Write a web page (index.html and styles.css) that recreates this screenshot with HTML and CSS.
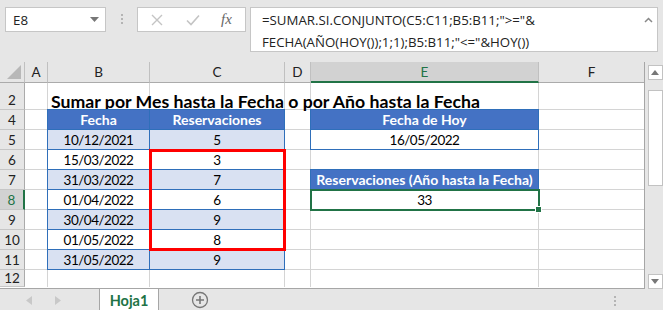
FILE: index.html
```html
<!DOCTYPE html>
<html lang="es">
<head>
    <meta charset="UTF-8">
    <title>Sumar por Mes hasta la Fecha</title>
    <link rel="stylesheet" href="styles.css">
</head>
<body>

    <!-- Formula bar -->
    <div class="toolbar">
        <div class="namebox">
            <span>E8</span>
            <svg class="drop" width="9" height="5" viewBox="0 0 9 5"><path d="M0 0h9L4.5 5z" fill="#777"/></svg>
        </div>
        <div class="grip"><i></i><i></i><i></i></div>
        <div class="fxbox">
            <svg width="12" height="12" viewBox="0 0 12 12"><path d="M1 1l10 10M11 1L1 11" stroke="#c4c4c4" stroke-width="1.4"/></svg>
            <svg width="14" height="12" viewBox="0 0 14 12"><path d="M1 6.5l4 4L13 1.5" stroke="#c4c4c4" stroke-width="1.6" fill="none"/></svg>
            <span class="fx">fx</span>
        </div>
        <div class="formula">
            <div class="ftext">=SUMAR.SI.CONJUNTO(C5:C11;B5:B11;"&gt;="&amp;<br>FECHA(AÑO(HOY());1;1);B5:B11;"&lt;="&amp;HOY())</div>
            <svg class="caret" width="9" height="6" viewBox="0 0 9 6"><path d="M1 5l3.5-3.5L8 5" stroke="#888" stroke-width="1.5" fill="none"/></svg>
        </div>
    </div>

    <div class="main">
        <div class="sheet">
            <!-- column headers -->
            <div class="corner"><svg width="14" height="14" viewBox="0 0 14 14"><path d="M14 0v14H0z" fill="#b8b8b8"/></svg></div>
            <div class="colhdr">A</div>
            <div class="colhdr">B</div>
            <div class="colhdr">C</div>
            <div class="colhdr">D</div>
            <div class="colhdr active">E</div>
            <div class="colhdr last">F</div>

            <!-- row headers -->
            <div class="rowhdr r2">2</div>
            <div class="rowhdr r4">4</div>
            <div class="rowhdr r5">5</div>
            <div class="rowhdr r6">6</div>
            <div class="rowhdr r7">7</div>
            <div class="rowhdr r8 active">8</div>
            <div class="rowhdr r9">9</div>
            <div class="rowhdr r10">10</div>
            <div class="rowhdr r11">11</div>
            <div class="rowhdr r12">12</div>

            <!-- gridlines -->
            <div class="hline r2"></div>
            <div class="hline r4"></div>
            <div class="hline r5"></div>
            <div class="hline r6"></div>
            <div class="hline r7"></div>
            <div class="hline r8"></div>
            <div class="hline r9"></div>
            <div class="hline r10"></div>
            <div class="hline r11"></div>
            <div class="vline ca"></div>
            <div class="vline cb"></div>
            <div class="vline cc"></div>
            <div class="vline cd"></div>
            <div class="vline ce"></div>

            <div class="title">Sumar por Mes hasta la Fecha o por Año hasta la Fecha</div>

            <div class="tbl">
                <div class="th">Fecha</div><div class="th">Reservaciones</div>
                <div class="td band">10/12/2021</div><div class="td band">5</div>
                <div class="td">15/03/2022</div><div class="td">3</div>
                <div class="td band">31/03/2022</div><div class="td band">7</div>
                <div class="td">01/04/2022</div><div class="td">6</div>
                <div class="td band">30/04/2022</div><div class="td band">9</div>
                <div class="td">01/05/2022</div><div class="td">8</div>
                <div class="td band">31/05/2022</div><div class="td band">9</div>
            </div>

            <div class="box today">
                <div class="th">Fecha de Hoy</div>
                <div class="td">16/05/2022</div>
            </div>

            <div class="box total">
                <div class="th">Reservaciones (Año hasta la Fecha)</div>
                <div class="td">33</div>
            </div>

            <div class="redbox"></div>
            <div class="selection"><span class="handle"></span></div>
        </div>

        <div class="vscroll">
            <div class="sbtn"><svg width="8" height="5" viewBox="0 0 8 5"><path d="M0 5h8L4 0z" fill="#777"/></svg></div>
            <div class="thumb"></div>
            <div class="sbtn down"><svg width="8" height="5" viewBox="0 0 8 5"><path d="M0 0h8L4 5z" fill="#777"/></svg></div>
        </div>
    </div>

    <!-- Sheet tabs -->
    <div class="tabs">
        <div class="nav">
            <svg width="6" height="9" viewBox="0 0 6 9"><path d="M6 0v9L0 4.5z" fill="#c8c8c8"/></svg>
            <svg width="6" height="9" viewBox="0 0 6 9"><path d="M0 0v9l6-4.5z" fill="#c8c8c8"/></svg>
        </div>
        <div class="tab">Hoja1</div>
        <div class="add">
            <svg width="18" height="18" viewBox="0 0 18 18"><circle cx="9" cy="9" r="7.5" fill="none" stroke="#777" stroke-width="1.3"/><path d="M9 5v8M5 9h8" stroke="#777" stroke-width="1.6"/></svg>
        </div>
        <div class="tabgrip"><i></i><i></i><i></i></div>
    </div>

</body>
</html>
```

FILE: styles.css
```css
body {
    margin: 0;
    width: 663px;
    height: 310px;
    overflow: hidden;
    background-color: #e6e6e6;
    font-family: Lato, "Liberation Sans", sans-serif;
    color: #000;
}

/* Formula bar */
.toolbar {
    height: 62px;
    display: flex;
    align-items: flex-start;
    padding: 7px 0 0 5px;
    box-sizing: border-box;
    font-family: "Open Sans", "Noto Sans", sans-serif;
}
.namebox {
    width: 101px;
    height: 25px;
    box-sizing: border-box;
    background-color: white;
    border: 1px solid #c6c6c6;
    display: flex;
    align-items: center;
    justify-content: space-between;
    padding: 0 6px 0 7px;
    font-size: 13.3px;
    color: #222;
}
.grip {
    width: 31px;
    display: flex;
    flex-direction: column;
    align-items: center;
    gap: 2px;
    padding-top: 7px;
}
.grip i, .tabgrip i {
    display: block;
    width: 2px;
    height: 2px;
    background-color: #b4b4b4;
}
.fxbox {
    width: 109px;
    height: 25px;
    box-sizing: border-box;
    background-color: white;
    border: 1px solid #c6c6c6;
    display: flex;
    align-items: center;
    padding-left: 13px;
    gap: 23px;
}
.fxbox .fx {
    font-family: "Liberation Serif", serif;
    font-style: italic;
    font-size: 15px;
    color: #666;
    margin-left: -2px;
}
.formula {
    width: 408px;
    height: 45px;
    margin-left: 4px;
    box-sizing: border-box;
    background-color: white;
    border: 1px solid #c6c6c6;
    display: flex;
    justify-content: space-between;
    padding: 1px 4px 0 11px;
}
.ftext {
    font-size: 13.25px;
    line-height: 22px;
    color: #222;
    white-space: nowrap;
}
.caret {
    margin-top: 8px;
}

/* Sheet */
.main {
    display: flex;
}
.sheet {
    display: grid;
    grid-template-columns: 25px 23px 102px 135px 26px 228px 105px;
    grid-template-rows: 21px 27px repeat(8, 20px) 17px;
    background-color: white;
    border-right: 1px solid #a6a6a6;
    border-bottom: 1px solid #a6a6a6;
    font-size: 13.5px;
}
.corner {
    grid-column: 1;
    grid-row: 1;
    background-color: #e6e6e6;
    border-right: 1px solid #c0c0c0;
    border-bottom: 1px solid #ababab;
    display: flex;
    align-items: flex-end;
    justify-content: flex-end;
    padding: 0 3px 3px 0;
}
.colhdr {
    grid-row: 1;
    background-color: #e6e6e6;
    border-right: 1px solid #c0c0c0;
    border-bottom: 1px solid #ababab;
    display: flex;
    align-items: center;
    justify-content: center;
    font-size: 13.5px;
    color: #222;
}
.colhdr.last {
    border-right: none;
}
.colhdr.active {
    background-color: #d2d2d2;
    color: #217346;
    border-bottom: 2px solid #217346;
}
.rowhdr {
    grid-column: 1;
    background-color: #e6e6e6;
    border-right: 1px solid #ababab;
    border-bottom: 1px solid #c6c6c6;
    display: flex;
    align-items: center;
    justify-content: center;
    font-size: 13.5px;
    color: #222;
}
.rowhdr.active {
    background-color: #d2d2d2;
    color: #217346;
    border-right: 2px solid #217346;
}
.r2 { grid-row: 2; }
.r4 { grid-row: 3; }
.r5 { grid-row: 4; }
.r6 { grid-row: 5; }
.r7 { grid-row: 6; }
.r8 { grid-row: 7; }
.r9 { grid-row: 8; }
.r10 { grid-row: 9; }
.r11 { grid-row: 10; }
.r12 { grid-row: 11; }
.rowhdr.r2 {
    align-items: flex-end;
    padding-bottom: 1px;
}
.hline {
    grid-column: 2 / -1;
    border-bottom: 1px solid #d4d4d4;
}
.vline {
    grid-row: 2 / -1;
    border-right: 1px solid #d4d4d4;
}
.ca { grid-column: 2; }
.cb { grid-column: 3; }
.cc { grid-column: 4; }
.cd { grid-column: 5; }
.ce { grid-column: 6; }

.title {
    grid-column: 3 / 8;
    grid-row: 2;
    align-self: end;
    padding: 0 0 1px 3px;
    font-size: 17.7px;
    font-weight: bold;
    line-height: 14px;
    white-space: nowrap;
}

/* Tables */
.tbl, .box {
    margin: -1px 0 0 -1px;
    display: grid;
    border-left: 1px solid #2f6fba;
    border-top: 1px solid #2f6fba;
}
.tbl {
    grid-column: 3 / 5;
    grid-row: 3 / 11;
    grid-template-columns: 102px 135px;
    grid-template-rows: repeat(8, 20px);
}
.box {
    grid-column: 6;
    grid-template-rows: 20px 20px;
}
.today { grid-row: 3 / 5; }
.total { grid-row: 6 / 8; }
.th, .td {
    border-right: 1px solid #2f6fba;
    border-bottom: 1px solid #2f6fba;
    display: flex;
    align-items: center;
    justify-content: center;
    white-space: nowrap;
}
.th {
    background-color: #4472c4;
    color: white;
    font-weight: bold;
    font-size: 14px;
}
.td {
    background-color: white;
    letter-spacing: -0.5px;
}
.td.band {
    background-color: #d9e1f2;
}
.total .td {
    border-right-color: transparent;
    border-bottom-color: transparent;
}

.redbox {
    grid-column: 4;
    grid-row: 5 / 10;
    margin: -1px -1px -1px -1px;
    border: 3px solid #ff0000;
}
.selection {
    grid-column: 6;
    grid-row: 7;
    margin: -1px;
    border: 2px solid #217346;
    position: relative;
}
.handle {
    position: absolute;
    right: -4px;
    bottom: -4px;
    width: 5px;
    height: 5px;
    background-color: #217346;
    border: 1px solid white;
}

/* Vertical scrollbar */
.vscroll {
    width: 18px;
    display: flex;
    flex-direction: column;
    align-items: center;
    padding: 3px 0 0 2px;
    box-sizing: border-box;
}
.sbtn {
    width: 15px;
    height: 15px;
    box-sizing: border-box;
    background-color: white;
    border: 1px solid #c2c2c2;
    display: flex;
    align-items: center;
    justify-content: center;
}
.thumb {
    width: 15px;
    height: 96px;
    margin-top: 10px;
    box-sizing: border-box;
    background-color: white;
    border: 1px solid #c2c2c2;
}
.sbtn.down {
    margin-top: 88px;
}

/* Tabs */
.tabs {
    height: 22px;
    display: flex;
    align-items: stretch;
}
.nav {
    width: 100px;
    display: flex;
    align-items: center;
    gap: 23px;
    padding-left: 26px;
    box-sizing: border-box;
    border-right: 1px solid #a6a6a6;
}
.tab {
    width: 58px;
    background-color: white;
    border-right: 1px solid #a6a6a6;
    display: flex;
    align-items: center;
    justify-content: center;
    color: #217346;
    font-weight: bold;
    font-size: 14.5px;
}
.add {
    width: 80px;
    display: flex;
    align-items: center;
    padding-left: 32px;
    box-sizing: border-box;
}
.tabgrip {
    display: flex;
    flex-direction: column;
    gap: 2px;
    margin-left: 375px;
    padding-top: 7px;
}
```
